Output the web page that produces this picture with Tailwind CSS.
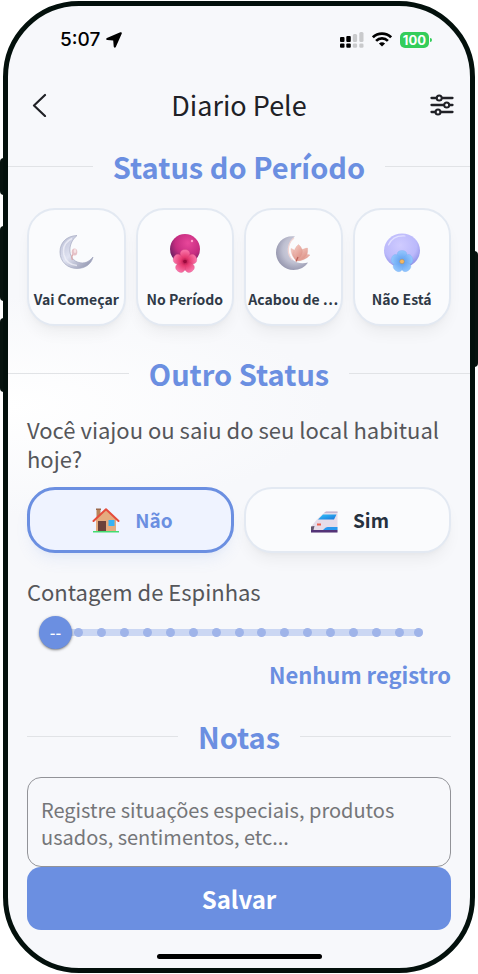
<!DOCTYPE html>
<html lang="pt-BR">
<head>
    <meta charset="UTF-8">
    <meta name="viewport" content="width=device-width, initial-scale=1.0">
    <title>Diario Pele</title>
    <script src="https://cdn.jsdelivr.net/npm/@tailwindcss/browser@4"></script>
    <style>
        body {
            font-family: 'Noto Sans CJK SC', 'Noto Sans', sans-serif;
        }
    </style>
</head>
<body class="bg-white">

<div class="relative min-h-screen flex flex-col px-[3px] pt-px pb-px">

    <!-- Side buttons -->
    <span class="absolute left-0 top-[158px] h-[37px] w-2 rounded-l-sm bg-[#07130f]"></span>
    <span class="absolute left-0 top-[226px] h-[75px] w-2 rounded-l-sm bg-[#07130f]"></span>
    <span class="absolute left-0 top-[318px] h-[74px] w-2 rounded-l-sm bg-[#07130f]"></span>
    <span class="absolute right-0 top-[251px] h-[116px] w-2 rounded-r-sm bg-[#07130f]"></span>

    <div class="relative flex-1 flex flex-col overflow-hidden rounded-[76px] border-5 border-[#03100c] bg-[#f7f8fb] bg-[radial-gradient(ellipse_320px_110px_at_0_400px,#ffffff,#f7f8fb)]">

        <!-- Status bar -->
        <div class="flex h-[66px] shrink-0 items-center justify-between pt-px pl-[52px] pr-[38px] text-black">
            <div class="flex items-center gap-[6px]">
                <span class="font-['Inter'] text-[19px] font-medium leading-6">5:07</span>
                <svg class="size-4" viewBox="0 0 16 16" fill="currentColor"><path d="M14.3.3.9 6.1C-.2 6.600 0 8 1.200 8.100L7.200 8.500 7.700 14.600C7.800 15.900 9.300 16 9.800 14.900L15.700 1.700C16.100.7 15.300-.1 14.300.3Z"/></svg>
            </div>
            <div class="flex items-center gap-2">
                <svg class="h-4 w-6" viewBox="0 0 24 16">
                    <g fill="#000"><rect x="0" y="5" width="4.500" height="5" rx="1"/><rect x="6.300" y="4" width="4.500" height="6" rx="1"/><rect x="0" y="11.500" width="4.500" height="4.300" rx="1"/><rect x="6.300" y="11.500" width="4.500" height="4.300" rx="1"/></g>
                    <g fill="#c9cacc"><rect x="12.800" y="2" width="4.300" height="8" rx="1.500"/><rect x="19.300" y="0" width="4.200" height="10" rx="1.500"/><rect x="12.800" y="11.500" width="4.300" height="4.300" rx="1.300"/><rect x="19.300" y="11.500" width="4.200" height="4.300" rx="1.300"/></g>
                </svg>
                <svg class="h-[15px] w-5" viewBox="0 0 20 15" fill="none" stroke="#000" stroke-width="2.700"><path d="M.9 5.300a13 13 0 0 1 18.200 0M4.100 8.900a8.300 8.300 0 0 1 11.800 0"/><path d="M10 14.500 6.900 11.600a4.500 4.500 0 0 1 6.200 0Z" fill="#000" stroke="none"/></svg>
                <div class="flex items-center gap-px">
                    <span class="rounded-[5px] bg-[#34cd5b] px-[3px] font-['Inter'] text-[13px] font-bold leading-4 text-white">100</span>
                    <span class="h-1 w-[2px] rounded-r-sm bg-[#34cd5b]"></span>
                </div>
            </div>
        </div>

        <!-- Header -->
        <header class="flex h-[66px] shrink-0 items-center justify-between px-4 text-[#202126]">
            <button aria-label="Voltar" class="w-8 pl-2">
                <svg class="h-6 w-4" viewBox="0 0 16 24" fill="none" stroke="currentColor" stroke-width="2.200" stroke-linecap="round" stroke-linejoin="round"><path d="M13 2 2 12.500 13 23"/></svg>
            </button>
            <h1 class="text-[27px] leading-10">Diario Pele</h1>
            <button aria-label="Filtros" class="flex w-8 justify-end">
                <svg class="h-[22px] w-6" viewBox="0 0 24 22" fill="none" stroke="currentColor" stroke-width="2.300" stroke-linecap="round">
                    <path d="M1.500 4h5M12 4h10.500M1.500 11h12.500M19.500 11h3M1.500 18h4M10.500 18h12"/>
                    <circle cx="9.200" cy="4" r="2.500" stroke-width="2"/><circle cx="16.700" cy="11" r="2.500" stroke-width="2"/><circle cx="8" cy="18" r="2.500" stroke-width="2"/>
                </svg>
            </button>
        </header>

        <main class="flex flex-col">
            <!-- Status do Período -->
            <div class="mt-2 flex items-center gap-5">
                <span class="h-px flex-1 bg-[#e1e3e6]"></span>
                <h2 class="text-[29px] font-bold leading-10 text-[#6b8fe1]">Status do Período</h2>
                <span class="h-px flex-1 bg-[#e1e3e6]"></span>
            </div>
            <div class="mt-[22px] grid grid-cols-4 gap-[10px] px-[19px] text-[#2f3947]">
                <button class="flex h-[118px] flex-col items-center rounded-[28px] border-2 border-[#e3e9f2] bg-[#fafbfd] pt-[22px] shadow-lg shadow-black/5">
                    <svg class="h-11 w-11" viewBox="0 0 44 44">
                        <defs><linearGradient id="moonA" x1="0" y1="0" x2="1" y2="1"><stop offset="0" stop-color="#b9bdd3"/><stop offset=".45" stop-color="#dfe2f1"/><stop offset="1" stop-color="#878ba6"/></linearGradient></defs>
                        <path d="M23 3.500C12 4 6 11 6 20c0 9.500 7.500 16.500 17 16.500 8 0 14.500-4.500 16-11.500-4 5-9 7-14 5.500C14 28 12.500 12 23 3.500Z" fill="url(#moonA)" stroke="#a3a8c0" stroke-width=".7"/>
                        <path d="M18 6.500C10.500 10 8.500 16 10 23c1.500 6 6 10 13 10.500" fill="none" stroke="#f3f4fb" stroke-width="1.500" opacity=".7"/>
                        <path d="M18.500 28c-1-2-1-4 .5-6" fill="none" stroke="#dba7a8" stroke-width="1.300"/>
                        <ellipse cx="20.500" cy="20" rx="2.800" ry="3.600" fill="#e6c2c8"/><ellipse cx="21" cy="19" rx="1.300" ry="2.100" fill="#f6e2e4"/>
                    </svg>
                    <span class="mt-[13px] text-[14px] font-bold leading-5 whitespace-nowrap">Vai Começar</span>
                </button>
                <button class="flex h-[118px] flex-col items-center rounded-[28px] border-2 border-[#e3e9f2] bg-[#fafbfd] pt-[22px] shadow-lg shadow-black/5">
                    <svg class="h-11 w-11" viewBox="0 0 44 44">
                        <defs>
                            <radialGradient id="ballA" cx=".6" cy=".3" r=".7"><stop offset="0" stop-color="#e8479a"/><stop offset=".6" stop-color="#c52c80"/><stop offset="1" stop-color="#692062"/></radialGradient>
                            <radialGradient id="petalA" gradientUnits="userSpaceOnUse" cx="22" cy="29.500" r="12"><stop offset="0" stop-color="#a0083f"/><stop offset=".35" stop-color="#e5386f"/><stop offset="1" stop-color="#fb79ae"/></radialGradient>
                        </defs>
                        <circle cx="22" cy="17" r="15" fill="url(#ballA)"/>
                        <circle cx="29" cy="9" r="1.200" fill="#ff9fcb"/>
                        <g fill="url(#petalA)" stroke="#d03a76" stroke-width=".3">
                            <path d="M22 29.500C15 24 16 17.500 22 17.500s7 6.500 0 12Z"/>
                            <path d="M22 29.500C15 24 16 17.500 22 17.500s7 6.500 0 12Z" transform="rotate(72 22 29.500)"/>
                            <path d="M22 29.500C15 24 16 17.500 22 17.500s7 6.500 0 12Z" transform="rotate(144 22 29.500)"/>
                            <path d="M22 29.500C15 24 16 17.500 22 17.500s7 6.500 0 12Z" transform="rotate(216 22 29.500)"/>
                            <path d="M22 29.500C15 24 16 17.500 22 17.500s7 6.500 0 12Z" transform="rotate(288 22 29.500)"/>
                        </g>
                        <circle cx="22" cy="29.500" r="1.800" fill="#9b0a3c"/>
                    </svg>
                    <span class="mt-[13px] text-[14px] font-bold leading-5 whitespace-nowrap">No Período</span>
                </button>
                <button class="flex h-[118px] flex-col items-center rounded-[28px] border-2 border-[#e3e9f2] bg-[#fafbfd] pt-[22px] shadow-lg shadow-black/5">
                    <svg class="h-11 w-11" viewBox="0 0 44 44">
                        <defs>
                            <radialGradient id="moonB" cx=".6" cy=".4" r=".7"><stop offset="0" stop-color="#dcdae5"/><stop offset=".55" stop-color="#bfc0d1"/><stop offset="1" stop-color="#898aa4"/></radialGradient>
                            <linearGradient id="lily" x1="0" y1="0" x2=".6" y2="1"><stop offset="0" stop-color="#f6cfc7"/><stop offset="1" stop-color="#dc8f84"/></linearGradient>
                        </defs>
                        <path d="M24 4.500C13 3 5 11 5 20.500S13 38 22.500 38c6 0 12-3 14.500-7.500-5 1.500-11 1-15-2.500-7-6.500-5-18 2-23.500Z" fill="url(#moonB)"/>
                        <path d="M23 6c-6.500 5-8 16-1.500 22" fill="none" stroke="#f3d6d4" stroke-width="1.200"/>
                        <g fill="url(#lily)" stroke="#e0a298" stroke-width=".3">
                            <path d="M25.500 29c-4-4-5.500-8-5.500-12.500 5 1.500 7.500 6.500 5.500 12.500Z"/>
                            <path d="M25.500 29c5 0 10-2 13.500-6-5-2-10-.5-13.500 6Z"/>
                            <path d="M25.500 29c9-2 12-6 11-13-7 1-11.500 5-11 13Z"/>
                            <path d="M25.500 29c-4.500-6-3-12 2-16.500 6 5 5 11-2 16.500Z"/>
                        </g>
                        <path d="m25 29.500 2-4.500" stroke="#b95f57" stroke-width="1.200"/>
                    </svg>
                    <span class="mt-[13px] text-[14px] font-bold leading-5 whitespace-nowrap">Acabou de ⋯</span>
                </button>
                <button class="flex h-[118px] flex-col items-center rounded-[28px] border-2 border-[#e3e9f2] bg-[#fafbfd] pt-[22px] shadow-lg shadow-black/5">
                    <svg class="h-11 w-11" viewBox="0 0 44 44">
                        <defs>
                            <radialGradient id="ballB" cx=".45" cy=".35" r=".65"><stop offset="0" stop-color="#cfcbff"/><stop offset=".7" stop-color="#bbb9fb"/><stop offset="1" stop-color="#9393e8"/></radialGradient>
                            <radialGradient id="petalB" gradientUnits="userSpaceOnUse" cx="22" cy="29.500" r="12"><stop offset="0" stop-color="#5b9bee"/><stop offset="1" stop-color="#99cbff"/></radialGradient>
                        </defs>
                        <ellipse cx="22" cy="18.500" rx="18" ry="17" fill="url(#ballB)"/>
                        <path d="M8.500 13C11.500 6 18 3.500 25 4" fill="none" stroke="#e1e0ff" stroke-width="1.200" stroke-linecap="round"/>
                        <g fill="url(#petalB)" stroke="#73adf3" stroke-width=".3">
                            <path d="M22 29.500C15 24.500 16 18.500 22 18.500s7 6 0 11Z"/>
                            <path d="M22 29.500C15 24.500 16 18.500 22 18.500s7 6 0 11Z" transform="rotate(72 22 29.500)"/>
                            <path d="M22 29.500C15 24.500 16 18.500 22 18.500s7 6 0 11Z" transform="rotate(144 22 29.500)"/>
                            <path d="M22 29.500C15 24.500 16 18.500 22 18.500s7 6 0 11Z" transform="rotate(216 22 29.500)"/>
                            <path d="M22 29.500C15 24.500 16 18.500 22 18.500s7 6 0 11Z" transform="rotate(288 22 29.500)"/>
                        </g>
                        <circle cx="22" cy="29.500" r="2.300" fill="#f3b763" stroke="#a88958" stroke-width=".5"/>
                    </svg>
                    <span class="mt-[13px] text-[14px] font-bold leading-5 whitespace-nowrap">Não Está</span>
                </button>
            </div>

            <!-- Outro Status -->
            <div class="mt-[27px] flex items-center gap-5">
                <span class="h-px flex-1 bg-[#e1e3e6]"></span>
                <h2 class="text-[29px] font-bold leading-10 text-[#6b8fe1]">Outro Status</h2>
                <span class="h-px flex-1 bg-[#e1e3e6]"></span>
            </div>
            <div class="mt-[22px] px-[19px]">
                <p class="text-[22px] leading-[29px] text-[#55565a]">Você viajou ou saiu do seu local habitual hoje?</p>
                <div class="mt-[14px] grid grid-cols-2 gap-[10px]">
                    <button aria-pressed="true" class="flex h-[66px] items-center justify-center gap-[15px] rounded-[28px] border-3 border-[#6b8fe1] bg-[#eff3ff] pl-1 text-[19px] font-bold text-[#6b8fe1] shadow-lg shadow-[#6b8fe1]/10">
                        <svg class="h-7 w-7" viewBox="0 0 28 28">
                            <path d="M4.500 3h4v9h-4z" fill="#b9835a"/><path d="M4 2.500h5V4H4z" fill="#9b694c"/>
                            <path d="M4 13 14 4l10 9v13H4Z" fill="#e5ab7f"/>
                            <path d="M6 15h8v11H6z" fill="#6b413b"/><path d="M16.500 14h6v6h-6z" fill="#35b2f5"/>
                            <path d="M1.500 15 14 3.200 26.500 15" fill="none" stroke="#e54c3c" stroke-width="2" stroke-linejoin="round" stroke-linecap="round"/>
                            <path d="M1 25h26v1.500H1z" fill="#43dc70"/>
                        </svg>
                        <span>Não</span>
                    </button>
                    <button aria-pressed="false" class="flex h-[66px] items-center justify-center gap-[15px] rounded-[28px] border-2 border-[#e3e9f2] bg-[#fafbfd] pl-1 text-[19px] font-bold text-[#26313f] shadow-lg shadow-black/5">
                        <svg class="h-7 w-7" viewBox="0 0 28 28">
                            <defs><linearGradient id="glass" x1="0" y1="0" x2="1" y2="1"><stop offset="0" stop-color="#31c4fb"/><stop offset="1" stop-color="#1973d9"/></linearGradient></defs>
                            <path d="M27.500 5.500H16C12 8 5 15 1 21v5.500h26.500Z" fill="#e6dce9"/>
                            <path d="M27.500 5.500H16l-2 1.500h13.500Z" fill="#c5b5d0"/>
                            <path d="M13 8.500h13.500l-2.500 5H8Z" fill="url(#glass)"/>
                            <path d="M1 20.500 4.500 20 3.500 24 1 25Z" fill="#61566e"/>
                            <path d="M7 17.500h4v2H7z" fill="#ef604e"/>
                            <path d="M27.500 21H18c-2 0-3 1-5 3h14.500Z" fill="#2998ef"/>
                            <path d="M1 24h26.500v2.500H1z" fill="#533377"/>
                        </svg>
                        <span>Sim</span>
                    </button>
                </div>

                <label for="espinhas" class="mt-6 block text-[22px] leading-[29px] text-[#55565a]">Contagem de Espinhas</label>
                <div class="relative mt-[9px] ml-3 mr-7 h-[34px]">
                    <div class="absolute inset-y-0 left-4 right-0 flex items-center">
                        <div class="h-[7px] w-full rounded-full bg-[#cbd7f3]"></div>
                    </div>
                    <div class="absolute inset-y-0 left-7 right-0 flex items-center">
                        <span class="flex flex-1 justify-center"><i class="size-[9px] rounded-full bg-[#9fb4e9]"></i></span>
                        <span class="flex flex-1 justify-center"><i class="size-[9px] rounded-full bg-[#9fb4e9]"></i></span>
                        <span class="flex flex-1 justify-center"><i class="size-[9px] rounded-full bg-[#9fb4e9]"></i></span>
                        <span class="flex flex-1 justify-center"><i class="size-[9px] rounded-full bg-[#9fb4e9]"></i></span>
                        <span class="flex flex-1 justify-center"><i class="size-[9px] rounded-full bg-[#9fb4e9]"></i></span>
                        <span class="flex flex-1 justify-center"><i class="size-[9px] rounded-full bg-[#9fb4e9]"></i></span>
                        <span class="flex flex-1 justify-center"><i class="size-[9px] rounded-full bg-[#9fb4e9]"></i></span>
                        <span class="flex flex-1 justify-center"><i class="size-[9px] rounded-full bg-[#9fb4e9]"></i></span>
                        <span class="flex flex-1 justify-center"><i class="size-[9px] rounded-full bg-[#9fb4e9]"></i></span>
                        <span class="flex flex-1 justify-center"><i class="size-[9px] rounded-full bg-[#9fb4e9]"></i></span>
                        <span class="flex flex-1 justify-center"><i class="size-[9px] rounded-full bg-[#9fb4e9]"></i></span>
                        <span class="flex flex-1 justify-center"><i class="size-[9px] rounded-full bg-[#9fb4e9]"></i></span>
                        <span class="flex flex-1 justify-center"><i class="size-[9px] rounded-full bg-[#9fb4e9]"></i></span>
                        <span class="flex flex-1 justify-center"><i class="size-[9px] rounded-full bg-[#9fb4e9]"></i></span>
                        <span class="flex flex-1 justify-center"><i class="size-[9px] rounded-full bg-[#9fb4e9]"></i></span>
                        <span class="flex w-3 justify-end"><i class="size-[9px] rounded-full bg-[#9fb4e9]"></i></span>
                    </div>
                    <input id="espinhas" type="range" min="0" max="16" value="0" class="absolute inset-0 h-full w-full appearance-none bg-transparent [&::-webkit-slider-thumb]:size-[33px] [&::-webkit-slider-thumb]:appearance-none [&::-webkit-slider-thumb]:rounded-full [&::-webkit-slider-thumb]:bg-[#6b8fe1] [&::-webkit-slider-thumb]:shadow-sm [&::-webkit-slider-thumb]:shadow-black/40">
                    <span class="pointer-events-none absolute inset-y-0 left-0 flex w-[33px] items-center justify-center text-base font-medium text-white">--</span>
                </div>
                <output for="espinhas" class="mt-[11px] block text-right text-[22px] font-bold leading-[29px] text-[#6b8fe1]">Nenhum registro</output>

                <!-- Notas -->
                <div class="mt-[27px] flex items-center gap-5">
                    <span class="h-px flex-1 bg-[#e1e3e6]"></span>
                    <h2 class="text-[29px] font-bold leading-10 text-[#6b8fe1]"><label for="notas">Notas</label></h2>
                    <span class="h-px flex-1 bg-[#e1e3e6]"></span>
                </div>
                <textarea id="notas" placeholder="Registre situações especiais, produtos usados, sentimentos, etc..." class="mt-[21px] block h-[90px] w-full resize-none overflow-hidden rounded-[14px] border border-[#929398] px-[13px] pt-[18px] text-xl leading-[27px] text-[#55565a] placeholder:text-[#757679]"></textarea>
                <button class="block h-[63px] w-full rounded-[14px] bg-[#6b8fe1] text-2xl font-bold text-white">Salvar</button>
            </div>
        </main>

        <!-- Home indicator -->
        <div class="mx-auto mt-6 mb-2 h-[5px] w-[165px] shrink-0 rounded-full bg-black"></div>
    </div>
</div>

</body>
</html>
